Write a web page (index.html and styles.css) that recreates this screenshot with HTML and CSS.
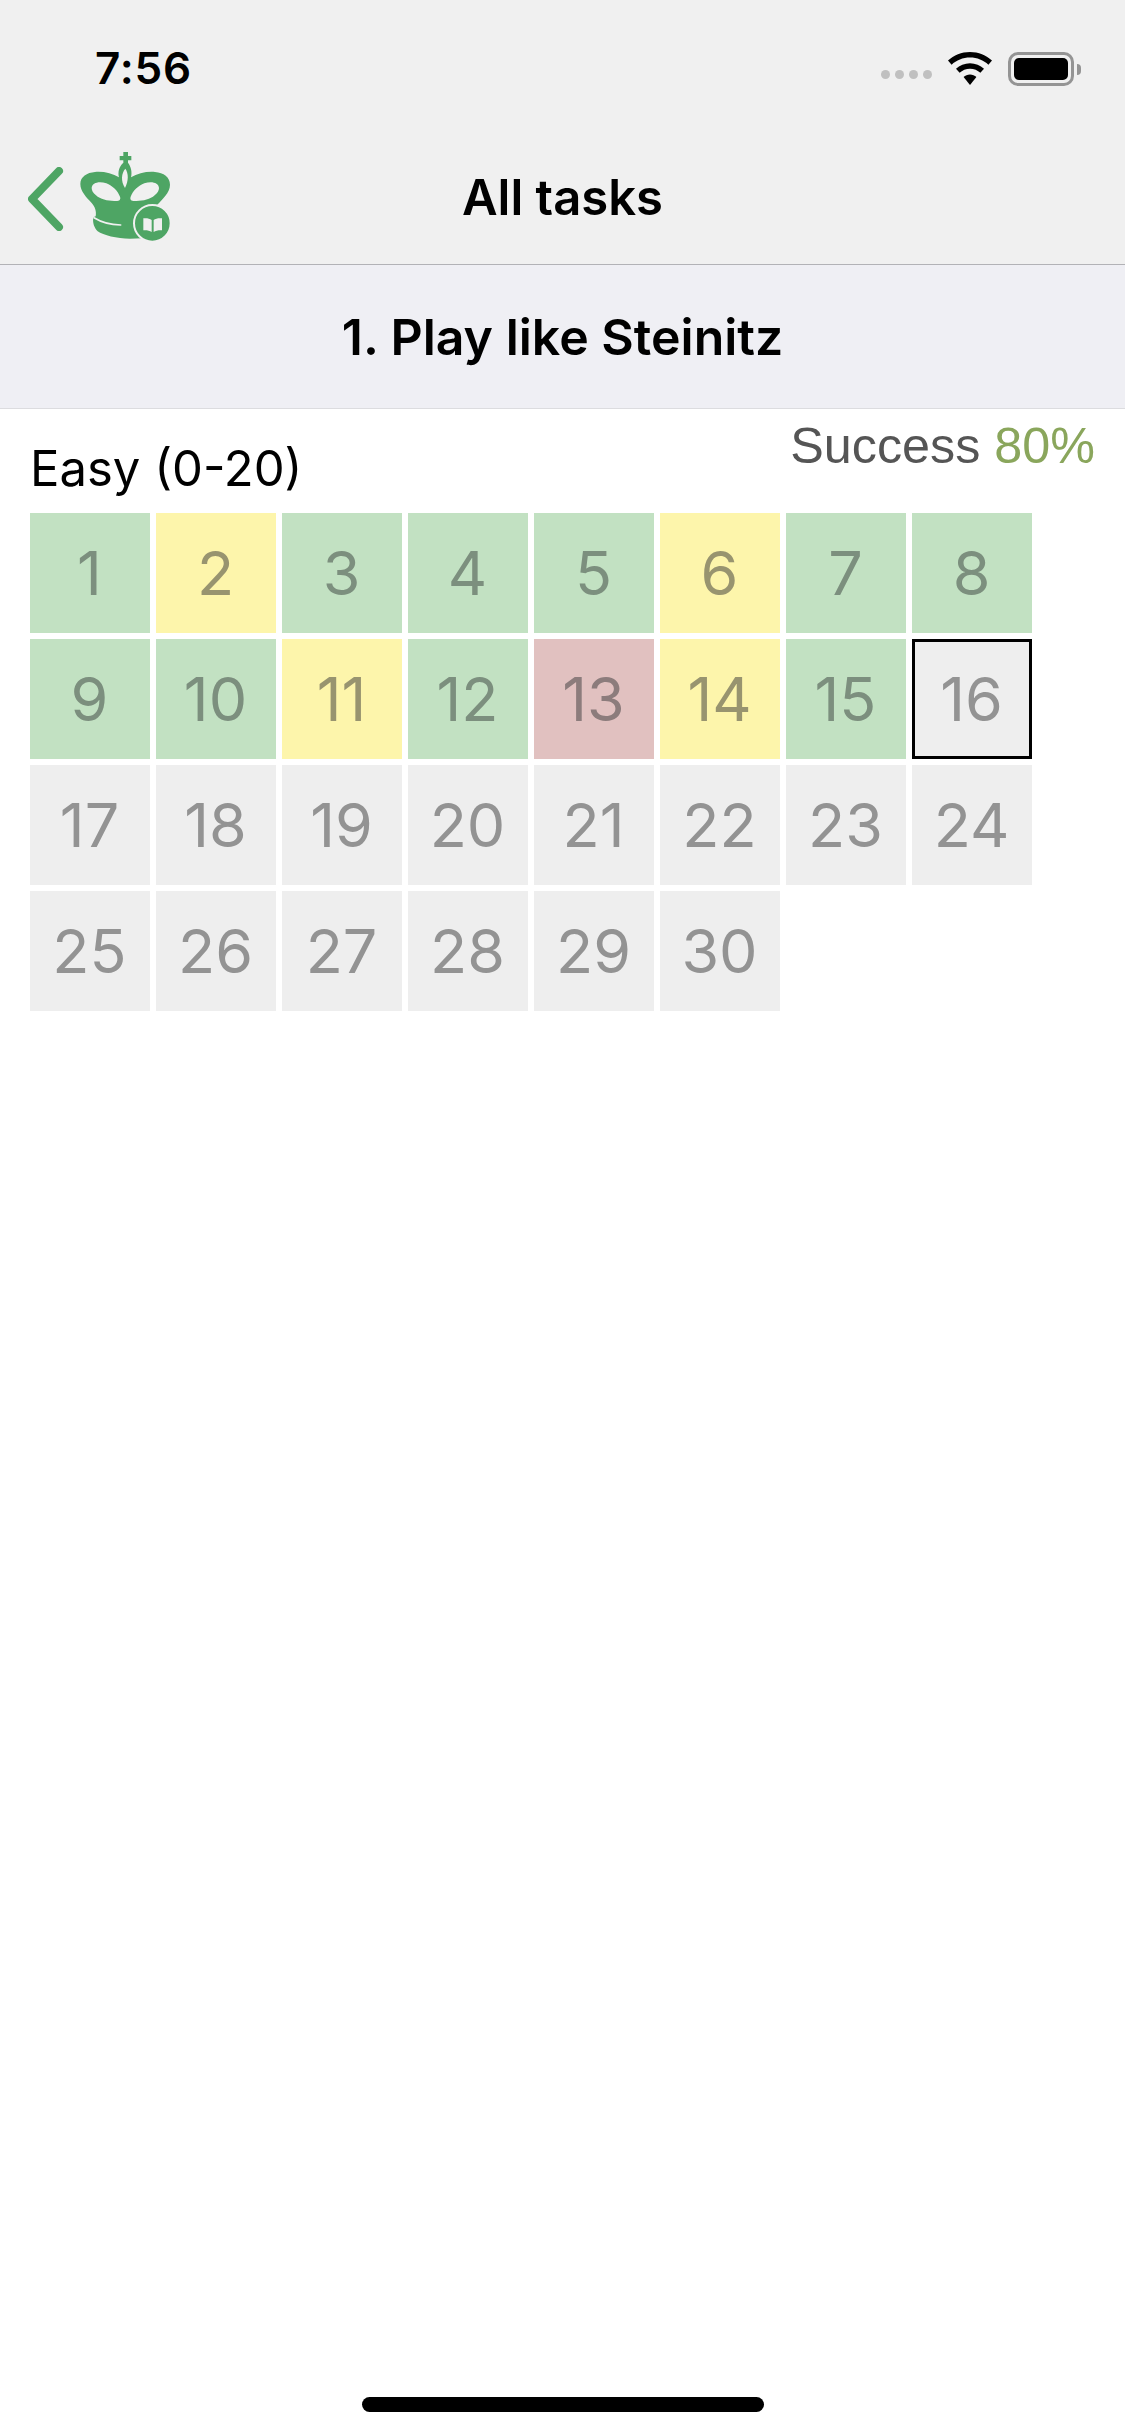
FILE: index.html
```html
<!DOCTYPE html>
<html lang="en">
<head>
<meta charset="utf-8">
<title>All tasks</title>
<link rel="stylesheet" href="styles.css">
</head>
<body>
<div class="page">
  <header class="top">
    <div class="status">
      <span class="time">7:56</span>
      <div class="status-icons">
        <div class="dots"><i></i><i></i><i></i><i></i></div>
        <svg class="wifi" width="46" height="34" viewBox="0 0 46 34"><path d="M23 0C14.500 0 6.800 3.200 1 8.600L4.600 12.700C9.400 8.200 15.900 5.500 23 5.500S36.600 8.200 41.400 12.700L45 8.600C39.200 3.200 31.500 0 23 0Z"/><path d="M23 11.200C17.600 11.200 12.700 13.300 9 16.700L12.600 20.800C15.300 18.300 19 16.700 23 16.700S30.700 18.300 33.400 20.800L37 16.700C33.300 13.300 28.400 11.200 23 11.200Z"/><path d="M23 22.500C20.500 22.500 18.300 23.400 16.600 24.900L23 33L29.400 24.900C27.700 23.400 25.500 22.500 23 22.500Z"/></svg>
        <div class="battery"><div class="battery-body"><div class="battery-fill"></div></div><div class="battery-cap"></div></div>
      </div>
    </div>
    <nav class="nav">
      <div class="nav-left">
        <svg class="chevron" width="36" height="64" viewBox="0 0 36 64"><path d="M31 4L4 32L31 60"/></svg>
        <svg class="logo" width="100" height="100" viewBox="0 0 300 300">
          <path class="crown" fill-rule="evenodd" d="M145 12H159V24H169V37H159V44C168 56 172 72 168 88C188 76 214 70 240 72C266 74 285 88 285 110C285 134 262 154 245 172L220 270L165 272C125 272 85 262 68 250C58 240 52 225 55 208L62 205C65 190 60 176 50 165C34 148 16 130 16 108C16 86 36 74 60 72C86 70 112 76 132 88C128 72 132 56 145 44V37H134V24H145ZM151 62C139 76 137 98 150 120C161 98 161 76 151 62ZM50 120C51 104 72 98 94 106C112 113 128 128 135 146C138 154 134 159 123 159C101 160 77 155 63 142C54 135 50 127 50 120ZM252 120C251 104 230 98 208 106C190 113 174 128 167 146C164 154 168 159 179 159C201 160 225 155 239 142C248 135 252 127 252 120Z"/>
          <path class="crown-line" d="M57 209C78 222 105 230 137 231"/>
          <circle class="badge-ring" cx="232" cy="226" r="55"/>
          <path class="badge-book" d="M205 211c9-1 19 0 25 5v36c-6-4-16-6-25-5zM261 211c-9-1-19 0-25 5v36c6-4 16-6 25-5z"/>
        </svg>
      </div>
      <h1 class="nav-title">All tasks</h1>
    </nav>
  </header>
  <section class="section-head"><h2>1. Play like Steinitz</h2></section>
  <main class="content">
    <div class="meta">
      <span class="level">Easy (0-20)</span>
      <span class="success">Success <b>80%</b></span>
    </div>
    <div class="grid">
      <div class="tile ok">1</div><div class="tile mid">2</div><div class="tile ok">3</div><div class="tile ok">4</div><div class="tile ok">5</div><div class="tile mid">6</div><div class="tile ok">7</div><div class="tile ok">8</div>
      <div class="tile ok">9</div><div class="tile ok">10</div><div class="tile mid">11</div><div class="tile ok">12</div><div class="tile bad">13</div><div class="tile mid">14</div><div class="tile ok">15</div><div class="tile current">16</div>
      <div class="tile">17</div><div class="tile">18</div><div class="tile">19</div><div class="tile">20</div><div class="tile">21</div><div class="tile">22</div><div class="tile">23</div><div class="tile">24</div>
      <div class="tile">25</div><div class="tile">26</div><div class="tile">27</div><div class="tile">28</div><div class="tile">29</div><div class="tile">30</div>
    </div>
  </main>
  <div class="home-bar"></div>
</div>
</body>
</html>
```
FILE: styles.css
```css
* { box-sizing: border-box; }
html, body { margin: 0; padding: 0; background: #fff; }
body { font-family: Inter, "Liberation Sans", sans-serif; color: #000; }
.page { width: 1125px; height: 2436px; display: flex; flex-direction: column; overflow: hidden; position: relative; }
.top { background: #f0f0f0; height: 265px; border-bottom: 1px solid #b2b2b6; flex: none; }
.status { height: 132px; display: flex; justify-content: space-between; align-items: flex-start; padding: 44px 44px 0 95px; }
.time { font-size: 44px; font-weight: 600; line-height: 48px; letter-spacing: 0.8px; }
.status-icons { display: flex; align-items: center; gap: 15px; padding-top: 8px; }
.dots { display: flex; gap: 5px; margin-top: 11px; }
.dots i { display: block; width: 9px; height: 9px; border-radius: 50%; background: #c0c0c0; }
.wifi { display: block; fill: #000; margin-top: -1px; }
.battery { display: flex; align-items: center; gap: 3px; }
.battery-body { width: 66px; height: 34px; border: 3px solid #949494; border-radius: 10px; padding: 3px; }
.battery-fill { height: 100%; background: #000; border-radius: 5px; }
.battery-cap { width: 4px; height: 11px; background: #949494; border-radius: 0 4px 4px 0; }
.nav { height: 132px; display: flex; align-items: center; justify-content: center; position: relative; }
.nav-left { position: absolute; left: 28px; top: 16px; display: flex; align-items: flex-start; gap: 11px; }
.chevron { display: block; margin-top: 19px; }
.chevron path { fill: none; stroke: #4ea564; stroke-width: 8px; stroke-linecap: round; stroke-linejoin: round; }
.logo { display: block; }
.crown { fill: #4ea564; }
.crown-line { fill: none; stroke: #f0f0f0; stroke-width: 5px; stroke-linecap: round; }
.badge-ring { fill: #4ea564; stroke: #f0f0f0; stroke-width: 6px; }
.badge-book { fill: #f0f0f0; }
.nav-title { margin: 0; font-size: 49px; font-weight: 600; line-height: 56px; }
.section-head { height: 144px; background: #efeff4; border-bottom: 1px solid #dcdcdf; display: flex; align-items: center; justify-content: center; flex: none; }
.section-head h2 { margin: 0; font-size: 50px; font-weight: 600; line-height: 56px; }
.content { flex: 1; padding: 0 30px; }
.meta { height: 104px; display: flex; justify-content: space-between; position: relative; }
.level { font-size: 49px; line-height: 54px; padding-top: 33px; }
.success { position: absolute; right: 0; top: 5px; font-family: "Liberation Sans", sans-serif; font-size: 50.300px; line-height: 64px; color: #555; }
.success b { font-weight: 400; color: #8aa65c; }
.grid { display: grid; grid-template-columns: repeat(8, 120px); grid-auto-rows: 120px; gap: 6px; }
.tile { background: #eee; color: #939393; font-size: 61px; font-weight: 380; display: flex; align-items: center; justify-content: center; padding-right: 1px; }
.ok { background: #c2e1c2; color: #7c8f7e; }
.mid { background: #fdf5ab; color: #98946f; }
.bad { background: #e1c1c0; color: #8c7c7c; }
.current { border: 3px solid #000; }
.home-bar { position: absolute; left: 362px; top: 2397px; width: 402px; height: 15px; background: #000; border-radius: 8px; }
```
